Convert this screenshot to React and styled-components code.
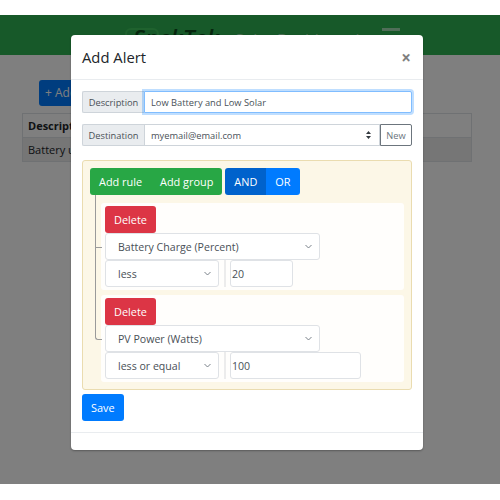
import React from 'react';
import styled, { createGlobalStyle } from 'styled-components';

const GlobalStyle = createGlobalStyle`
    body {
        margin: 0;
        background: #fff;
        font-family: "Open Sans", "Liberation Sans", sans-serif;
        color: #212529;
    }
    * { box-sizing: border-box; }
`;

const Page = styled.div`
    width: 500px;
    height: 500px;
    padding-top: 15px;
    background: #fff;
    overflow: hidden;
`;

const Screen = styled.div`
    position: relative;
    height: 469px;
    background: #fff;
    overflow: hidden;
`;

const Navbar = styled.div`
    height: 40px;
    background: #2eb352;
    display: flex;
    align-items: flex-start;
    padding-left: 125px;
    padding-top: 9px;
`;

const Logo = styled.div`
    font-size: 23px;
    font-style: italic;
    font-weight: 600;
    color: #0c4d1c;
    line-height: 28px;
    position: relative;
    padding-left: 8px;
    &::before {
        content: '';
        position: absolute;
        left: 0;
        top: 4px;
        width: 30px;
        height: 10px;
        border: 2px solid #3ec45c;
        border-radius: 6px;
    }
`;

const Brand = styled.div`
    font-size: 16px;
    color: rgba(255, 255, 255, 0.55);
    line-height: 28px;
    margin: 2px 0 0 16px;
`;

const Burger = styled.div`
    width: 18px;
    margin: 4px 0 0 22px;
    display: flex;
    flex-direction: column;
    gap: 4px;
    span {
        height: 3px;
        background: rgba(255, 255, 255, 0.55);
    }
`;

const Content = styled.div`
    padding: 25px 28px 0 22px;
`;

const AddButton = styled.div`
    margin-left: 17px;
    width: 70px;
    height: 26px;
    background: #007bff;
    border-radius: 3px;
    color: #fff;
    font-size: 12px;
    line-height: 26px;
    padding-left: 6px;
`;

const Table = styled.table`
    margin-top: 7px;
    width: 100%;
    border-collapse: collapse;
    font-size: 11px;
    td, th {
        border: 1px solid #dee2e6;
        height: 24px;
        padding: 0 5px;
        text-align: left;
    }
    tbody tr {
        background: #ececec;
    }
`;

const Backdrop = styled.div`
    position: absolute;
    inset: 0;
    background: rgba(0, 0, 0, 0.5);
`;

const Modal = styled.div`
    position: absolute;
    left: 71px;
    top: 20px;
    width: 352px;
    background: #fff;
    border-radius: 4px;
    box-shadow: 0 1px 2px rgba(0, 0, 0, 0.3);
`;

const ModalHeader = styled.div`
    height: 45px;
    padding: 0 11px;
    display: flex;
    align-items: center;
    justify-content: space-between;
    border-bottom: 1px solid #e9ecef;
`;

const Title = styled.h5`
    margin: 0;
    font-size: 14.8px;
    font-weight: 500;
`;

const Close = styled.span`
    font-size: 17px;
    font-weight: 700;
    color: #000;
    opacity: 0.5;
    margin-right: 1px;
    line-height: 1;
`;

const ModalBody = styled.div`
    padding: 11px;
`;

const InputGroup = styled.div`
    display: flex;
    height: 22px;
    margin-bottom: ${p => p.gap || 0}px;
    font-size: 9.3px;
`;

const Addon = styled.div`
    width: 62px;
    flex: none;
    display: flex;
    align-items: center;
    justify-content: center;
    background: #e9ecef;
    border: 1px solid #ced4da;
    border-right: none;
    border-radius: 2px 0 0 2px;
    color: #495057;
`;

const TextInput = styled.input`
    flex: 1;
    min-width: 0;
    height: 22px;
    border: 1px solid #80bdff;
    box-shadow: 0 0 0 2px rgba(0, 123, 255, 0.25);
    border-radius: 0 2px 2px 0;
    padding: 0 6px;
    font: inherit;
    color: #495057;
    outline: none;
`;

const FakeSelect = styled.div`
    flex: 1;
    display: flex;
    align-items: center;
    justify-content: space-between;
    border: 1px solid #ced4da;
    padding: 0 8px 0 6px;
    color: #495057;
`;

const UpDown = styled.svg`
    width: 5px;
    height: 8px;
`;

const NewButton = styled.div`
    width: 32px;
    flex: none;
    display: flex;
    align-items: center;
    justify-content: center;
    border: 1px solid #6c757d;
    border-radius: 0 2px 2px 0;
    color: #6c757d;
`;

const Builder = styled.div`
    margin-top: 14px;
    padding: 7px;
    background: #fcf7e7;
    border: 1px solid #eadcb0;
    border-radius: 3px;
`;

const Toolbar = styled.div`
    display: flex;
    gap: 3px;
`;

const BtnGroup = styled.div`
    display: flex;
    border-radius: 3px;
    overflow: hidden;
`;

const Button = styled.div`
    height: 27px;
    padding: 0 9px;
    display: flex;
    align-items: center;
    font-size: 10.9px;
    color: #fff;
    background: ${p => p.bg};
    border-radius: ${p => (p.round ? '3px' : '0')};
    width: fit-content;
`;

const Rules = styled.div`
    margin-left: 11px;
    margin-top: 8px;
    display: flex;
    flex-direction: column;
    gap: 5px;
`;

const RuleCard = styled.div`
    position: relative;
    background: rgba(255, 255, 255, 0.85);
    border-radius: 3px;
    padding: 3px 4px;
    display: flex;
    flex-direction: column;
    &::before {
        content: '';
        position: absolute;
        left: -6px;
        top: ${p => (p.first ? '-8px' : '-5px')};
        width: 6px;
        height: calc(50% + ${p => (p.first ? '8px' : '5px')});
        border-left: 1px solid #9a9a9a;
        border-bottom: 1px solid #9a9a9a;
        border-bottom-left-radius: ${p => (p.last ? '3px' : '0')};
    }
    &::after {
        content: '';
        display: ${p => (p.last ? 'none' : 'block')};
        position: absolute;
        left: -6px;
        top: 50%;
        height: 50%;
        border-left: 1px solid #9a9a9a;
    }
`;

const Select = styled.div`
    width: ${p => p.w}px;
    height: 27px;
    display: flex;
    align-items: center;
    justify-content: space-between;
    padding: 0 7px 0 12px;
    border: 1px solid #dfe2e6;
    border-radius: 3px;
    font-size: 10.6px;
    color: #495057;
    background: #fff;
`;

const Chevron = styled.svg`
    width: 7px;
    height: 5px;
`;

const Row = styled.div`
    display: flex;
    align-items: stretch;
`;

const Divider = styled.div`
    width: 2px;
    margin: 0 4px 0 5px;
    background: #ececec;
`;

const ValueInput = styled.div`
    width: ${p => p.w}px;
    height: 27px;
    display: flex;
    align-items: center;
    padding-left: 1px;
    border: 1px solid #dfe2e6;
    border-radius: 3px;
    font-size: 10.6px;
    color: #495057;
    background: #fff;
`;

const Footer = styled.div`
    height: 18px;
    border-top: 1px solid #e9ecef;
`;

const SaveRow = styled.div`
    margin-top: 4px;
`;

const ChevronIcon = () => (
    <Chevron viewBox="0 0 7 5">
        <path d="M0.5 1 L3.5 4 L6.5 1" fill="none" stroke="#6c757d" strokeWidth="0.9" />
    </Chevron>
);

const rules = [
    { field: 'Battery Charge (Percent)', op: 'less', value: '20', valueWidth: 63 },
    { field: 'PV Power (Watts)', op: 'less or equal', value: '100', valueWidth: 131 },
];

export default function App() {
    return (
        <Page>
            <GlobalStyle />
            <Screen>
                <Navbar>
                    <Logo>SnekTek</Logo>
                    <Brand>Solar Dashboard</Brand>
                    <Burger><span /><span /><span /></Burger>
                </Navbar>
                <Content>
                    <AddButton>+ Add</AddButton>
                    <Table>
                        <thead>
                            <tr><th>Description</th><th>Destination</th></tr>
                        </thead>
                        <tbody>
                            <tr><td>Battery under 20%</td><td>myemail@email.com</td></tr>
                        </tbody>
                    </Table>
                </Content>
                <Backdrop />
                <Modal>
                    <ModalHeader>
                        <Title>Add Alert</Title>
                        <Close>×</Close>
                    </ModalHeader>
                    <ModalBody>
                        <InputGroup gap={11}>
                            <Addon>Description</Addon>
                            <TextInput defaultValue="Low Battery and Low Solar" />
                        </InputGroup>
                        <InputGroup>
                            <Addon>Destination</Addon>
                            <FakeSelect>
                                <span>myemail@email.com</span>
                                <UpDown viewBox="0 0 5 8">
                                    <path d="M2.5 0 L5 3 L0 3 Z M2.5 8 L5 5 L0 5 Z" fill="#343a40" />
                                </UpDown>
                            </FakeSelect>
                            <NewButton>New</NewButton>
                        </InputGroup>
                        <Builder>
                            <Toolbar>
                                <BtnGroup>
                                    <Button bg="#28a745">Add rule</Button>
                                    <Button bg="#28a745">Add group</Button>
                                </BtnGroup>
                                <BtnGroup>
                                    <Button bg="#0062cc">AND</Button>
                                    <Button bg="#007bff">OR</Button>
                                </BtnGroup>
                            </Toolbar>
                            <Rules>
                                {rules.map((r, i) => (
                                    <RuleCard key={r.field} first={i === 0} last={i === rules.length - 1}>
                                        <Button bg="#dc3545" round>Delete</Button>
                                        <Select w={215}>
                                            <span>{r.field}</span>
                                            <ChevronIcon />
                                        </Select>
                                        <Row>
                                            <Select w={114}>
                                                <span>{r.op}</span>
                                                <ChevronIcon />
                                            </Select>
                                            <Divider />
                                            <ValueInput w={r.valueWidth}>{r.value}</ValueInput>
                                        </Row>
                                    </RuleCard>
                                ))}
                            </Rules>
                        </Builder>
                        <SaveRow>
                            <Button bg="#007bff" round>Save</Button>
                        </SaveRow>
                    </ModalBody>
                    <Footer />
                </Modal>
            </Screen>
        </Page>
    );
}
